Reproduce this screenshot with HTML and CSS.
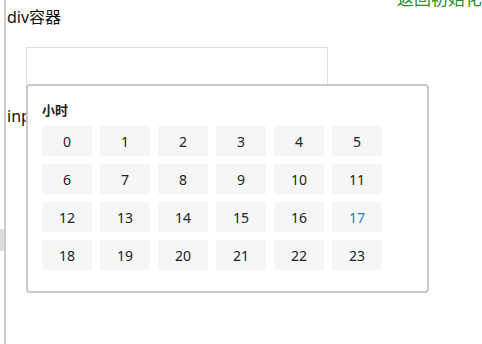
FILE: index.html
```html
<!DOCTYPE html>
<html>

<head>
  <title>小时选择</title>
  <link rel="stylesheet" href="styles.css">
</head>

<body>
  <div class="page">
    <a class="back-link">返回初始化</a>
    <div class="title">div容器</div>
    <div class="box"></div>
    <div class="label">input</div>

    <!-- 小时选择弹层 -->
    <div class="hour-panel">
      <div class="hour-title">小时</div>
      <div class="hour-grid">
        <div class="hour">0</div>
        <div class="hour">1</div>
        <div class="hour">2</div>
        <div class="hour">3</div>
        <div class="hour">4</div>
        <div class="hour">5</div>
        <div class="hour">6</div>
        <div class="hour">7</div>
        <div class="hour">8</div>
        <div class="hour">9</div>
        <div class="hour">10</div>
        <div class="hour">11</div>
        <div class="hour">12</div>
        <div class="hour">13</div>
        <div class="hour">14</div>
        <div class="hour">15</div>
        <div class="hour">16</div>
        <div class="hour active">17</div>
        <div class="hour">18</div>
        <div class="hour">19</div>
        <div class="hour">20</div>
        <div class="hour">21</div>
        <div class="hour">22</div>
        <div class="hour">23</div>
      </div>
    </div>
    <div class="handle"></div>
  </div>
</body>

</html>
```

FILE: styles.css
```css
html,
body {
  margin: 0;
  padding: 0;
  background-color: #fff;
  overflow: hidden;
}

body {
  font-family: "Noto Sans", "Noto Sans CJK SC", sans-serif;
  color: #111;
}

.page {
  position: relative;
  margin-left: 4px;
  padding-left: 1px;
  border-left: 2px solid #cdcdcd;
  height: 344px;
}

.back-link {
  position: absolute;
  top: -15px;
  left: 391px;
  font-size: 17px;
  color: #2e8b2e;
  white-space: nowrap;
}

.title {
  padding-top: 7px;
  font-size: 16px;
  line-height: 20px;
}

.box {
  margin: 20px 0 0 19px;
  width: 300px;
  height: 40px;
  border: 1px solid #dedede;
}

.label {
  margin-top: 17px;
  font-size: 16px;
  line-height: 20px;
}

/* 弹层 */
.hour-panel {
  position: absolute;
  left: 20px;
  top: 84px;
  width: 385px;
  height: 205px;
  background-color: #fff;
  border: 2px solid #c8c8c8;
  border-radius: 4px;
  padding: 0 0 0 14px;
  box-sizing: content-box;
}

.hour-title {
  margin-top: 15px;
  font-size: 13px;
  font-weight: bold;
  line-height: 18px;
  color: #222;
}

.hour-grid {
  margin-top: 7px;
  display: grid;
  grid-template-columns: repeat(6, 50px);
  grid-auto-rows: 30px;
  gap: 8px;
}

.hour {
  background-color: #f5f6f6;
  display: flex;
  justify-content: center;
  align-items: center;
  font-size: 14px;
  color: #222;
}

.hour.active {
  color: #2d78cf;
}

.handle {
  position: absolute;
  left: -7px;
  top: 229px;
  width: 5px;
  height: 22px;
  background-color: #ddd;
}
```
